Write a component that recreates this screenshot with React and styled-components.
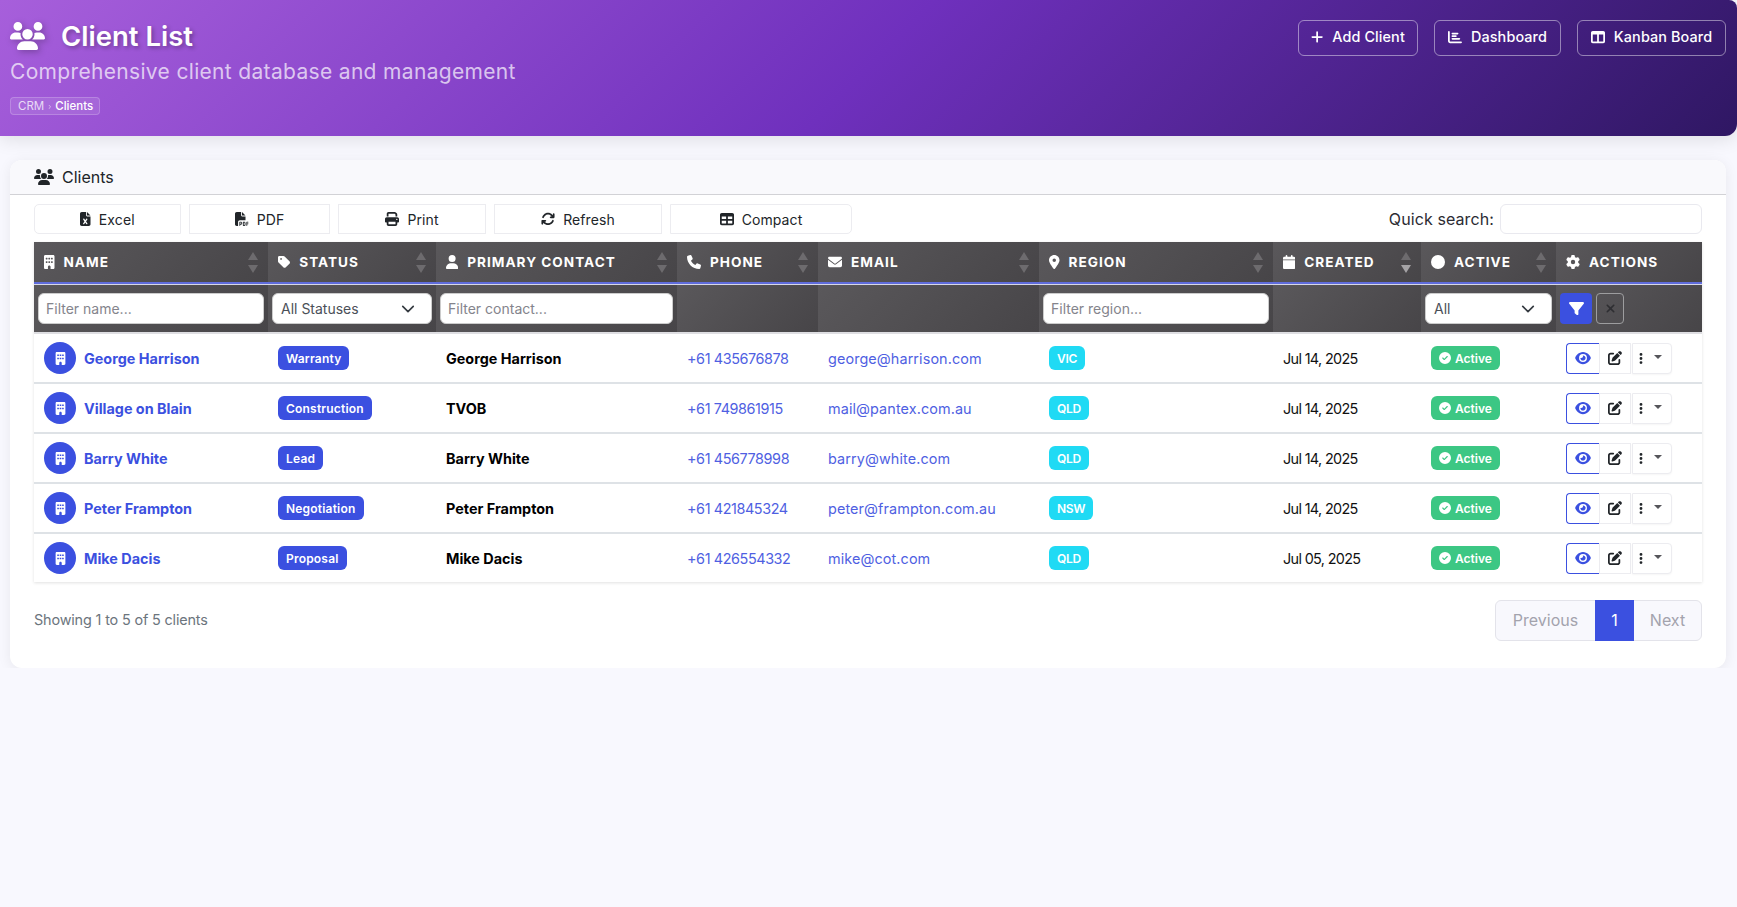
import React from "react";
import styled, { createGlobalStyle } from "styled-components";
import {
  FaUsers, FaPlus, FaChartBar, FaTableColumns, FaFileExcel, FaFilePdf, FaPrint,
  FaArrowsRotate, FaTable, FaBuilding, FaTag, FaUser, FaPhone, FaEnvelope,
  FaLocationDot, FaCalendar, FaCircle, FaGear, FaFilter, FaXmark, FaEye,
  FaPenToSquare, FaEllipsisVertical, FaCircleCheck,
} from "react-icons/fa6";

const BLUE = "#3b50e0";
const FONT = `"Inter", "Noto Sans", sans-serif`;

const GlobalStyle = createGlobalStyle`
  * { box-sizing: border-box; }
  html, body { margin: 0; padding: 0; }
  body {
    background: #f8f8fe;
    font-family: ${FONT};
    color: #212529;
  }
`;

const Header = styled.header`
  height: 136px;
  padding: 16px 11px 0 10px;
  display: flex;
  justify-content: space-between;
  align-items: flex-start;
  color: #fff;
  background: linear-gradient(135deg, #a75fdb 0%, #6f30bd 50%, #2f1763 100%);
  border-radius: 0 8px 12px 0;
  box-shadow: 0 4px 18px rgba(0, 0, 0, 0.1);
`;

const TitleRow = styled.div`
  display: flex;
  align-items: center;
  gap: 16px;
  height: 40px;
  svg {
    font-size: 32px;
    width: 35px;
    filter: drop-shadow(2px 2px 3px rgba(0, 0, 0, 0.25));
  }
`;

const Title = styled.h1`
  margin: 0;
  font-size: 27.5px;
  font-weight: 600;
  letter-spacing: 0;
  text-shadow: 2px 2px 4px rgba(0, 0, 0, 0.3);
`;

const Subtitle = styled.div`
  font-size: 21px;
  line-height: 28px;
  margin-top: 2px;
  color: rgba(255, 255, 255, 0.7);
  letter-spacing: 0.33px;
`;

const Breadcrumb = styled.div`
  display: inline-flex;
  align-items: center;
  gap: 4px;
  height: 18px;
  width: 90px;
  margin-top: 11px;
  padding-left: 7px;
  font-size: 11.5px;
  color: rgba(255, 255, 255, 0.75);
  background: rgba(255, 255, 255, 0.1);
  border: 1px solid rgba(255, 255, 255, 0.2);
  border-radius: 4px;
  b { color: #fff; font-weight: 500; }
  i { font-style: normal; font-size: 8px; opacity: 0.7; }
`;

const HeaderActions = styled.div`
  display: flex;
  gap: 16px;
  margin-top: 4px;
`;

const HeaderButton = styled.button`
  width: ${(p) => p.$w}px;
  height: 36px;
  padding: 0 0 3px;
  display: flex;
  align-items: center;
  justify-content: center;
  gap: 9px;
  font-family: ${FONT};
  font-size: 14.4px;
  font-weight: 500;
  letter-spacing: 0.1px;
  color: #fff;
  background: transparent;
  border: 1px solid rgba(255, 255, 255, 0.45);
  border-radius: 6px;
  svg { height: 14px; width: ${(p) => p.$icon || 14}px; }
`;

const Main = styled.main`
  padding: 24px 11px 0 10px;
`;

const Card = styled.section`
  background: #fff;
  border-radius: 12px;
  box-shadow: 0 2px 14px rgba(0, 0, 0, 0.07);
  padding-bottom: 27px;
`;

const CardHeader = styled.div`
  height: 35px;
  padding-left: 24px;
  display: flex;
  align-items: center;
  gap: 8px;
  font-size: 16px;
  background: #f9f9fc;
  border-bottom: 1px solid #d2d2d6;
  border-radius: 12px 12px 0 0;
  svg { font-size: 18px; width: 20px; color: #212529; }
`;

const CardBody = styled.div`
  padding: 9px 24px 0;
`;

const Toolbar = styled.div`
  display: flex;
  align-items: center;
  gap: 8px;
  height: 30px;
  margin-bottom: 8px;
`;

const ToolButton = styled.button`
  width: ${(p) => p.$w}px;
  height: 30px;
  padding: 0;
  display: flex;
  align-items: center;
  justify-content: center;
  gap: 8px;
  font-family: ${FONT};
  font-size: 14px;
  letter-spacing: 0.1px;
  color: #212529;
  background: #fff;
  border: 1.5px solid #ececf0;
  border-radius: ${(p) => (p.$first ? "5px 0 0 5px" : p.$last ? "0 5px 5px 0" : "0")};
  svg { height: 14px; width: ${(p) => p.$icon || 14}px; }
`;

const Search = styled.label`
  margin-left: auto;
  display: flex;
  align-items: center;
  gap: 6px;
  font-size: 16px;
  letter-spacing: 0.1px;
  color: #2b2b33;
  input {
    width: 202px;
    height: 30px;
    border: 1.5px solid #e9e9ef;
    border-radius: 6px;
    background: #fff;
  }
`;

const Table = styled.table`
  width: 1668px;
  table-layout: fixed;
  border-collapse: separate;
  border-spacing: 0;
  box-shadow: 0 1px 3px rgba(0, 0, 0, 0.12);
`;

const HeadCell = styled.th`
  height: 42px;
  padding: 0 10px;
  background: linear-gradient(135deg, #5a585b 0%, #474548 100%);
  color: #fff;
  text-align: left;
  font-size: 13.6px;
  font-weight: 700;
  letter-spacing: 1px;
  text-transform: uppercase;
  border-bottom: 2px solid #5f6cdc;
`;

const HeadInner = styled.div`
  display: flex;
  align-items: center;
  gap: 9px;
  white-space: nowrap;
  svg { height: 14px; width: ${(p) => p.$icon || 14}px; flex: none; }
`;

const SortMarks = styled.span`
  margin-left: auto;
  display: flex;
  flex-direction: column;
  gap: 5px;
`;

const Triangle = styled.i`
  display: block;
  width: 0;
  height: 0;
  border-left: 5px solid transparent;
  border-right: 5px solid transparent;
  ${(p) => (p.$down ? "border-top" : "border-bottom")}: 8px solid ${(p) => (p.$on ? "#a5a3a6" : "#6d6b6e")};
`;

const FilterCell = styled.td`
  height: 50px;
  padding: 8px 4px 0;
  vertical-align: top;
  background: linear-gradient(135deg, #5a585b 0%, #474548 100%);
  border-top: 1px solid #d8d8e6;
  border-bottom: 2px solid #dedee2;
`;

const FilterInput = styled.input`
  display: block;
  width: 100%;
  height: 31px;
  padding: 0 7px;
  font-family: ${FONT};
  font-size: 14px;
  color: #555;
  background: #fff;
  border: 1px solid #ccc;
  border-radius: 6px;
  &::placeholder { color: #84848c; opacity: 1; }
`;

const FilterSelect = styled.div`
  height: 31px;
  padding: 0 16px 0 8px;
  display: flex;
  align-items: center;
  justify-content: space-between;
  font-size: 14px;
  color: #4b5058;
  background: #fff;
  border: 1px solid #ccc;
  border-radius: 6px;
`;

const ApplyButton = styled.button`
  width: 32px;
  height: 31px;
  display: flex;
  align-items: center;
  justify-content: center;
  padding: 0;
  color: #fff;
  font-size: 15px;
  background: ${BLUE};
  border: 0;
  border-radius: 4px;
`;

const ClearButton = styled(ApplyButton)`
  width: 28px;
  color: #2e2e32;
  font-size: 13px;
  background: transparent;
  border: 1px solid #9d9d9f;
`;

const FilterActions = styled.div`
  display: flex;
  gap: 4px;
`;

const Row = styled.tr`
  td { border-bottom: 2px solid #dee2e6; height: 50px; }
  &:last-child td { border-bottom: 0; height: 48px; }
`;

const Cell = styled.td`
  padding: 0 10px;
  font-size: 14.4px;
  background: #fff;
  white-space: nowrap;
  color: #111;
`;

const NameWrap = styled.div`
  display: flex;
  align-items: center;
  gap: 8px;
`;

const Avatar = styled.span`
  width: 32px;
  height: 32px;
  flex: none;
  display: flex;
  align-items: center;
  justify-content: center;
  color: #fff;
  font-size: 13px;
  background: ${BLUE};
  border-radius: 50%;
`;

const NameLink = styled.a`
  color: ${BLUE};
  font-weight: 700;
`;

const Contact = styled.span`
  color: #000;
  font-weight: 700;
`;

const TextLink = styled.a`
  color: #4f5fe2;
  letter-spacing: 0.1px;
`;

const PhoneLink = styled(TextLink)`
  letter-spacing: -0.4px;
`;

const DateText = styled.span`
  letter-spacing: -0.65px;
`;

const Badge = styled.span`
  display: inline-flex;
  align-items: center;
  gap: 4px;
  height: 24px;
  padding: 0 8px;
  color: #fff;
  font-size: 12px;
  font-weight: 600;
  letter-spacing: ${(p) => p.$track || 0}px;
  background: ${(p) => p.$bg};
  border-radius: 6px;
  svg { font-size: 12px; }
`;

const ActionGroup = styled.div`
  display: flex;
  height: 31px;
`;

const ViewButton = styled.button`
  width: 33px;
  padding: 0;
  display: flex;
  align-items: center;
  justify-content: center;
  color: ${BLUE};
  background: #fff;
  border: 1px solid ${BLUE};
  border-right: 0;
  border-radius: 4px 0 0 4px;
  svg { height: 14px; width: 16px; }
`;

const EditButton = styled(ViewButton)`
  width: 32px;
  color: #212529;
  border: 1px solid #ececf0;
  border-radius: 0;
  svg { width: 14px; }
`;

const MoreButton = styled(ViewButton)`
  width: 40px;
  margin-left: 1px;
  padding-right: 3px;
  gap: 11px;
  color: #212529;
  border: 1px solid #ececf0;
  border-radius: 0 4px 4px 0;
  box-shadow: 0 1px 2px rgba(0, 0, 0, 0.04);
  svg { height: 13px; width: 4px; }
  i {
    width: 0;
    height: 0;
    margin-bottom: 3px;
    border-left: 4px solid transparent;
    border-right: 4px solid transparent;
    border-top: 4px solid #55555a;
  }
`;

const Footer = styled.div`
  display: flex;
  align-items: center;
  justify-content: space-between;
  margin-top: 18px;
`;

const Info = styled.div`
  padding-bottom: 2px;
  font-size: 14.4px;
  letter-spacing: -0.15px;
  color: #6c757d;
`;

const Pager = styled.div`
  display: flex;
  height: 41px;
  font-size: 16px;
  color: #a3a3ad;
  background: #f8f8fd;
  border: 1px solid #e3e3ea;
  border-radius: 6px;
`;

const PageItem = styled.span`
  width: ${(p) => p.$w}px;
  padding-bottom: 2px;
  display: flex;
  align-items: center;
  justify-content: center;
  color: ${(p) => (p.$active ? "#fff" : "inherit")};
  background: ${(p) => (p.$active ? BLUE : "transparent")};
  margin: ${(p) => (p.$active ? "-1px 0" : "0")};
`;

const SelectChevron = () => (
  <svg width="14" height="14" viewBox="0 0 16 16" fill="none" stroke="#343a40" strokeWidth="1.9" strokeLinecap="round" strokeLinejoin="round">
    <path d="M2 5l6 6 6-6" />
  </svg>
);

const columns = [
  { label: "Name", icon: FaBuilding, iconWidth: 10.5, width: 234, sort: true },
  { label: "Status", icon: FaTag, iconWidth: 12.25, width: 168, sort: true },
  { label: "Primary Contact", icon: FaUser, iconWidth: 12.25, width: 241, sort: true },
  { label: "Phone", icon: FaPhone, width: 141, sort: true },
  { label: "Email", icon: FaEnvelope, width: 221, sort: true },
  { label: "Region", icon: FaLocationDot, iconWidth: 10.5, width: 234, sort: true },
  { label: "Created", icon: FaCalendar, iconWidth: 12.25, width: 148, sort: true, on: true },
  { label: "Active", icon: FaCircle, width: 135, sort: true },
  { label: "Actions", icon: FaGear, width: 146 },
];

const clients = [
  { name: "George Harrison", status: "Warranty", contact: "George Harrison", phone: "+61 435676878", email: "george@harrison.com", region: "VIC", created: "Jul 14, 2025" },
  { name: "Village on Blain", status: "Construction", contact: "TVOB", phone: "+61 749861915", email: "mail@pantex.com.au", region: "QLD", created: "Jul 14, 2025" },
  { name: "Barry White", status: "Lead", contact: "Barry White", phone: "+61 456778998", email: "barry@white.com", region: "QLD", created: "Jul 14, 2025" },
  { name: "Peter Frampton", status: "Negotiation", contact: "Peter Frampton", phone: "+61 421845324", email: "peter@frampton.com.au", region: "NSW", created: "Jul 14, 2025" },
  { name: "Mike Dacis", status: "Proposal", contact: "Mike Dacis", phone: "+61 426554332", email: "mike@cot.com", region: "QLD", created: "Jul 05, 2025" },
];

const tools = [
  { label: "Excel", icon: FaFileExcel, iconWidth: 10.5, width: 147, first: true },
  { label: "PDF", icon: FaFilePdf, width: 141 },
  { label: "Print", icon: FaPrint, width: 148 },
  { label: "Refresh", icon: FaArrowsRotate, width: 168 },
  { label: "Compact", icon: FaTable, width: 182, last: true },
];

export default function App() {
  return (
    <>
      <GlobalStyle />
      <Header>
        <div>
          <TitleRow>
            <FaUsers />
            <Title>Client List</Title>
          </TitleRow>
          <Subtitle>Comprehensive client database and management</Subtitle>
          <Breadcrumb>
            CRM <i>›</i> <b>Clients</b>
          </Breadcrumb>
        </div>
        <HeaderActions>
          <HeaderButton $w={120} $icon={12.25}><FaPlus /> Add Client</HeaderButton>
          <HeaderButton $w={127}><FaChartBar /> Dashboard</HeaderButton>
          <HeaderButton $w={149}><FaTableColumns /> Kanban Board</HeaderButton>
        </HeaderActions>
      </Header>
      <Main>
        <Card>
          <CardHeader><FaUsers /> Clients</CardHeader>
          <CardBody>
            <Toolbar>
              {tools.map((t) => (
                <ToolButton key={t.label} $w={t.width} $icon={t.iconWidth} $first={t.first} $last={t.last}>
                  <t.icon /> {t.label}
                </ToolButton>
              ))}
              <Search>
                Quick search:
                <input type="text" />
              </Search>
            </Toolbar>
            <Table>
              <colgroup>
                {columns.map((c) => <col key={c.label} width={c.width} />)}
              </colgroup>
              <thead>
                <tr>
                  {columns.map((c) => (
                    <HeadCell key={c.label}>
                      <HeadInner $icon={c.iconWidth}>
                        <c.icon /> {c.label}
                        {c.sort && (
                          <SortMarks>
                            <Triangle />
                            <Triangle $down $on={c.on} />
                          </SortMarks>
                        )}
                      </HeadInner>
                    </HeadCell>
                  ))}
                </tr>
                <tr>
                  <FilterCell><FilterInput placeholder="Filter name..." /></FilterCell>
                  <FilterCell><FilterSelect>All Statuses <SelectChevron /></FilterSelect></FilterCell>
                  <FilterCell><FilterInput placeholder="Filter contact..." /></FilterCell>
                  <FilterCell />
                  <FilterCell />
                  <FilterCell><FilterInput placeholder="Filter region..." /></FilterCell>
                  <FilterCell />
                  <FilterCell><FilterSelect>All <SelectChevron /></FilterSelect></FilterCell>
                  <FilterCell>
                    <FilterActions>
                      <ApplyButton><FaFilter /></ApplyButton>
                      <ClearButton><FaXmark /></ClearButton>
                    </FilterActions>
                  </FilterCell>
                </tr>
              </thead>
              <tbody>
                {clients.map((c) => (
                  <Row key={c.name}>
                    <Cell>
                      <NameWrap>
                        <Avatar><FaBuilding /></Avatar>
                        <NameLink>{c.name}</NameLink>
                      </NameWrap>
                    </Cell>
                    <Cell><Badge $bg={BLUE} $track={0.2}>{c.status}</Badge></Cell>
                    <Cell><Contact>{c.contact}</Contact></Cell>
                    <Cell><PhoneLink>{c.phone}</PhoneLink></Cell>
                    <Cell><TextLink>{c.email}</TextLink></Cell>
                    <Cell><Badge $bg="#20daf4" $track={-0.3}>{c.region}</Badge></Cell>
                    <Cell><DateText>{c.created}</DateText></Cell>
                    <Cell><Badge $bg="#3cc784"><FaCircleCheck /> Active</Badge></Cell>
                    <Cell>
                      <ActionGroup>
                        <ViewButton><FaEye /></ViewButton>
                        <EditButton><FaPenToSquare /></EditButton>
                        <MoreButton><FaEllipsisVertical /><i /></MoreButton>
                      </ActionGroup>
                    </Cell>
                  </Row>
                ))}
              </tbody>
            </Table>
            <Footer>
              <Info>Showing 1 to 5 of 5 clients</Info>
              <Pager>
                <PageItem $w={99}>Previous</PageItem>
                <PageItem $w={39} $active>1</PageItem>
                <PageItem $w={67}>Next</PageItem>
              </Pager>
            </Footer>
          </CardBody>
        </Card>
      </Main>
    </>
  );
}
